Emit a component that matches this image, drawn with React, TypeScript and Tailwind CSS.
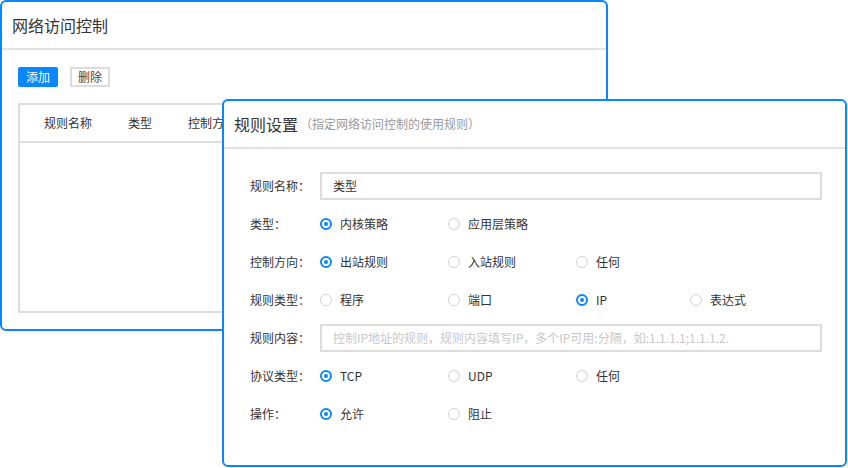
import React from "react"

const font = { fontFamily: '"Noto Sans CJK SC", "Noto Sans", sans-serif' }

type Opt = { label: string; checked?: boolean; w?: string }

const rows: { label: string; kind: "input" | "radio"; value?: string; placeholder?: string; options?: Opt[] }[] = [
  { label: "规则名称：", kind: "input", value: "类型" },
  { label: "类型：", kind: "radio", options: [{ label: "内核策略", checked: true }, { label: "应用层策略" }] },
  { label: "控制方向：", kind: "radio", options: [{ label: "出站规则", checked: true }, { label: "入站规则" }, { label: "任何" }] },
  {
    label: "规则类型：",
    kind: "radio",
    options: [{ label: "程序" }, { label: "端口" }, { label: "IP", checked: true, w: "w-[114px]" }, { label: "表达式" }],
  },
  {
    label: "规则内容：",
    kind: "input",
    placeholder: "控制IP地址的规则，规则内容填写IP，多个IP可用:分隔，如:1.1.1.1;1.1.1.2.",
  },
  { label: "协议类型：", kind: "radio", options: [{ label: "TCP", checked: true }, { label: "UDP" }, { label: "任何" }] },
  { label: "操作：", kind: "radio", options: [{ label: "允许", checked: true }, { label: "阻止" }] },
]

function Radio({ checked }: { checked?: boolean }) {
  return checked ? (
    <span className="flex h-[12px] w-[12px] items-center justify-center rounded-full border-2 border-[#0a86ff]">
      <span className="h-[4px] w-[4px] rounded-full bg-[#0a86ff]" />
    </span>
  ) : (
    <span className="h-[12px] w-[12px] rounded-full border border-[#d4d4d4]" />
  )
}

export default function App() {
  return (
    <div className="relative h-[468px] w-[848px] overflow-hidden bg-white text-[#333]" style={font}>
      {/* back window */}
      <div className="absolute left-0 top-0 flex h-[331px] w-[608px] flex-col rounded-md border-2 border-[#0a86ff] bg-white">
        <div className="flex h-[48px] items-center border-b-2 border-[#e2e2e2] pl-[10px] text-[16px]">网络访问控制</div>
        <div className="flex gap-[12px] pl-[16px] pt-[17px]">
          <button className="flex h-[20px] w-[40px] items-center justify-center rounded-[2px] bg-[#0a86ff] text-[12px] text-white">
            添加
          </button>
          <button className="flex h-[20px] w-[40px] items-center justify-center border-2 border-[#dcdcdc] text-[12px] text-[#444]">
            删除
          </button>
        </div>
        <div className="ml-[16px] mt-[16px] h-[210px] w-[572px] border-2 border-[#dedede]">
          <div className="flex h-[38px] items-center border-b-2 border-[#dedede] pl-[24px] text-[12px]">
            <span className="w-[84px]">规则名称</span>
            <span className="w-[60px]">类型</span>
            <span className="w-[90px]">控制方向</span>
            <span className="w-[90px]">规则类型</span>
            <span className="w-[90px]">协议类型</span>
            <span>操作</span>
          </div>
        </div>
      </div>

      {/* front window */}
      <div className="absolute left-[222px] top-[99px] flex h-[368px] w-[625px] flex-col rounded-md border-2 border-[#0a86ff] bg-white">
        <div className="flex h-[48px] items-center border-b-2 border-[#e2e2e2] pl-[10px]">
          <span className="text-[16px]">规则设置</span>
          <span className="ml-[2px] text-[12px] text-[#9a9a9a]">（指定网络访问控制的使用规则）</span>
        </div>
        <div className="flex flex-col pl-[26px] pr-[23px] pt-[18px]">
          {rows.map((r) => (
            <div key={r.label} className="flex h-[38px] items-center text-[12px]">
              <span className="w-[70px] shrink-0">{r.label}</span>
              {r.kind === "input" ? (
                <div className="flex h-[28px] flex-1 items-center border-2 border-[#dcdcdc] pl-[11px]">
                  {r.value ? <span>{r.value}</span> : <span className="text-[#c8c8c8]">{r.placeholder}</span>}
                </div>
              ) : (
                <div className="flex items-center">
                  {r.options!.map((o) => (
                    <div key={o.label} className={`flex items-center gap-[8px] ${o.w ?? "w-[128px]"}`}>
                      <Radio checked={o.checked} />
                      <span>{o.label}</span>
                    </div>
                  ))}
                </div>
              )}
            </div>
          ))}
        </div>
      </div>
    </div>
  )
}
